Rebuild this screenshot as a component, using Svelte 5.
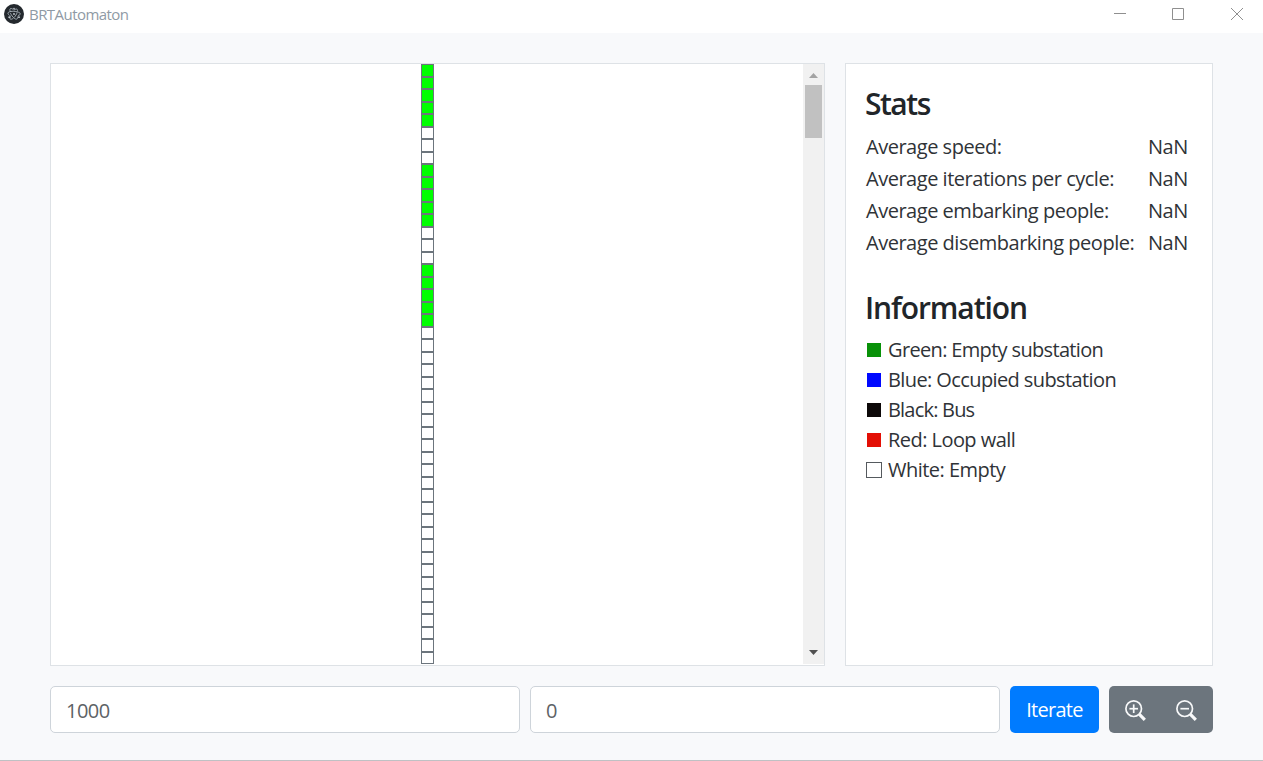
<script>
  const cells = Array.from({ length: 48 }, (_, i) => i < 21 && i % 8 < 5);
  const stats = ['Average speed:', 'Average iterations per cycle:', 'Average embarking people:', 'Average disembarking people:'];
  const legend = [
    ['#089108', 'Green: Empty substation'],
    ['#0008ff', 'Blue: Occupied substation'],
    ['#0c0808', 'Black: Bus'],
    ['#e30f05', 'Red: Loop wall'],
    ['', 'White: Empty']
  ];
</script>

<div class="window">
  <header>
    <svg class="logo" width="20" height="20" viewBox="0 0 20 20">
      <circle cx="10" cy="10" r="10" fill="#24292e" />
      <g fill="none" stroke="#aab4bc" stroke-width=".9" stroke-linecap="round">
        <path d="M12.500 7.600C8.400 6.900 4.400 7.500 4 9c-.2.700.3 1.500 1.300 2.300M14.500 8.200c1.400.6 2.100 1.300 1.800 2-.2.500-.9.900-1.900 1.200" />
        <path d="M6.600 9.500c1.800 3.800 4.900 6.300 6.300 5.500.6-.3.900-1.100.9-2.200M6.200 7.500c-.5-1.500-.4-2.500.2-2.900.6-.4 1.600 0 2.700.8" />
        <path d="M10.400 13.200c2.600-2.900 3.900-6.900 2.700-7.900-.6-.5-1.700-.2-2.900.6M9 14.500c-1.200.8-2.200 1-2.700.6-.5-.5-.4-1.700.2-3.100" />
      </g>
      <g fill="#c5cbd1"><circle cx="10" cy="10" r=".9" /><circle cx="5.200" cy="13.200" r=".9" /><circle cx="15" cy="13.200" r=".9" /><circle cx="10" cy="4.600" r=".8" /></g>
    </svg>
    <span class="title">BRTAutomaton</span>
    <svg class="controls" width="132" height="14" viewBox="0 0 132 14" fill="none" stroke="#8f8f8f">
      <path d="M0 6.500h12M58.500 1.500h11v11h-11z" />
      <path d="M117 1l12 12M129 1l-12 12" />
    </svg>
  </header>

  <main>
    <section class="panel board">
      <div class="canvas">
        <div class="track">
          {#each cells as green}<i class:green></i>{/each}
        </div>
      </div>
      <div class="scrollbar">
        <svg width="9" height="5" viewBox="0 0 9 5"><path d="M0 5L4.500 0L9 5z" fill="#a3a3a3" /></svg>
        <div class="thumb"></div>
        <svg class="down" width="9" height="5" viewBox="0 0 9 5"><path d="M0 0h9L4.500 5z" fill="#505050" /></svg>
      </div>
    </section>
    <aside class="panel info">
      <h2 class="h-stats">Stats</h2>
      <div class="stats">
        {#each stats as s}<span>{s}</span><span>NaN</span>{/each}
      </div>
      <h2 class="h-info">Information</h2>
      <ul>
        {#each legend as [color, label], i}
          <li><b class:empty={!color} style:background={color || null}></b><span class={['l0', 'l1', 'l2', 'l3', 'l4'][i]}>{label}</span></li>
        {/each}
      </ul>
    </aside>
  </main>

  <footer>
    <input aria-label="Iterations" value="1000" />
    <input aria-label="Delay" value="0" />
    <button class="iterate"><span>Iterate</span></button>
    <div class="zoom">
      {#each [true, false] as plus}
        <button class:plus aria-label={plus ? 'Zoom in' : 'Zoom out'}>
          <svg width="22" height="22" viewBox="0 0 22 22" fill="none" stroke="#f8f9fa">
            <circle cx="8.700" cy="8.700" r="7.800" stroke-width="1.700" />
            <path d="M4.400 8.700h8.600" stroke-width="1.700" />
            {#if plus}<path d="M8.700 4.400v8.600" stroke-width="1.700" />{/if}
            <path d="M14.200 14.200l5.600 5.600" stroke-width="3.200" />
          </svg>
        </button>
      {/each}
    </div>
  </footer>
</div>

<style>
  :global(body) { margin: 0; overflow: hidden; }
  .window {
    box-sizing: border-box; width: 1263px; height: 761px;
    display: flex; flex-direction: column;
    background: #f8f9fb; border-bottom: 1px solid #bfc1c4;
    color: #212529; font: 20px/30px 'Open Sans', 'Noto Sans', sans-serif;
  }
  header { flex: none; height: 33px; box-sizing: border-box; background: #fff; display: flex; padding: 4px 17px 0 4px; }
  .title { font-size: 15px; line-height: 21px; margin-left: 5px; color: #8f9aa5; letter-spacing: -.55px; }
  .controls { margin: 3px 0 0 auto; }
  main { flex: none; display: flex; gap: 20px; margin: 30px 50px 20px; height: 603px; }
  .panel { box-sizing: border-box; border: 1px solid #dee2e6; background: #fff; }
  .board { width: 775px; display: flex; }
  .canvas { flex: 1; display: flex; justify-content: center; }
  .track { width: 13px; }
  i { display: block; box-sizing: border-box; height: 12.5px; border: 1px solid #6c757d; background: #fff; }
  i.green { background: #0f0; }
  .scrollbar { width: 21px; height: 600px; background: #f1f1f1; display: flex; flex-direction: column; align-items: center; padding-top: 9px; box-sizing: border-box; }
  .scrollbar svg { flex: none; }
  .thumb { width: 17px; height: 53px; margin-top: 7px; background: #c1c1c1; }
  .down { margin: auto 0 9px; }
  .info { width: 368px; padding: 22px 20px 0 19px; }
  h2 { margin: 0; font-size: 30px; line-height: 36px; font-weight: 600; letter-spacing: -1.1px; }
  .h-stats { letter-spacing: -1.5px; }
  .stats { display: grid; grid-template-columns: 282px auto; grid-auto-rows: 32px; margin-top: 9px; line-height: 32px; padding-left: 1px; white-space: nowrap; color: #2f3337; letter-spacing: -.48px; }
  .h-info { margin-top: 31px; }
  ul { list-style: none; margin: 9px 0 0 1px; padding: 0; color: #2f3337; }
  li { height: 30px; display: flex; align-items: center; white-space: nowrap; }
  .l0 { letter-spacing: -.66px; }
  .l1 { letter-spacing: -.6px; }
  .l2 { letter-spacing: -.8px; }
  .l3 { letter-spacing: -.55px; }
  .l4 { letter-spacing: -.53px; }
  b { width: 14px; height: 14px; margin: 0 7px 0 1px; box-sizing: border-box; }
  b.empty { width: 16px; height: 16px; margin: 0 6px 0 0; border: 1px solid #555a5e; }
  footer { display: flex; margin: 0 50px; height: 47px; gap: 10px; }
  input { width: 470px; box-sizing: border-box; border: 1px solid #ced4da; border-radius: 5px; padding: 3px 15px 0; background: #fff; color: #5d6266; font: inherit; letter-spacing: -.55px; }
  button { border: 0; margin: 0; padding: 0; background: none; color: #fff; font: inherit; }
  .iterate { width: 89px; border-radius: 5px; background: #007bff; letter-spacing: -.7px; padding-top: 1px; }
  .zoom { width: 104px; border-radius: 5px; background: #6c757d; display: flex; }
  .zoom button { box-sizing: border-box; width: 52px; padding-top: 2px; display: flex; align-items: center; justify-content: center; }
  .zoom .plus { padding-left: 1px; }
</style>
